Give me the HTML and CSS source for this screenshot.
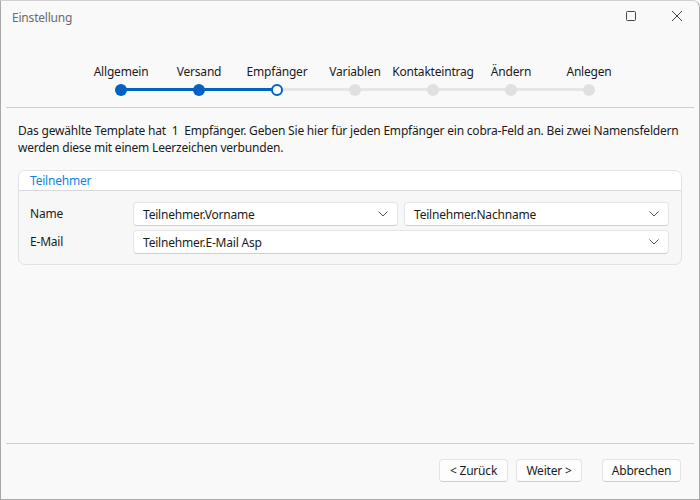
FILE: index.html
```html
<!DOCTYPE html>
<html lang="de">
<head>
  <meta charset="UTF-8" />
  <title>Einstellung</title>
  <link rel="stylesheet" href="styles.css">
</head>
<body>
  <div class="window">
    <div class="titlebar">
      <span class="title">Einstellung</span>
      <div class="controls">
        <svg class="ctl" width="12" height="12" viewBox="0 0 12 12"><rect x="1.5" y="1.5" width="9" height="9" rx="1" fill="none" stroke="#444" stroke-width="1"/></svg>
        <svg class="ctl" width="12" height="12" viewBox="0 0 12 12"><path d="M1 1 L11 11 M11 1 L1 11" stroke="#444" stroke-width="1"/></svg>
      </div>
    </div>

    <div class="stepper">
      <div class="step done first"><span class="label">Allgemein</span><span class="dot"></span></div>
      <div class="step done"><span class="label">Versand</span><span class="dot"></span></div>
      <div class="step current"><span class="label">Empfänger</span><span class="dot"></span></div>
      <div class="step"><span class="label">Variablen</span><span class="dot"></span></div>
      <div class="step"><span class="label">Kontakteintrag</span><span class="dot"></span></div>
      <div class="step"><span class="label">Ändern</span><span class="dot"></span></div>
      <div class="step last"><span class="label">Anlegen</span><span class="dot"></span></div>
    </div>

    <hr class="sep">

    <div class="content">
      <p class="intro">Das gewählte Template hat &nbsp;1&nbsp; Empfänger. Geben Sie hier für jeden Empfänger ein cobra-Feld an. Bei zwei Namensfeldern werden diese mit einem Leerzeichen verbunden.</p>

      <div class="group">
        <div class="group-head">Teilnehmer</div>
        <div class="group-body">
          <span class="field-label">Name</span>
          <div class="combo"><span>Teilnehmer.Vorname</span><svg width="10" height="6" viewBox="0 0 10 6"><path d="M0.5 0.5 L5 5 L9.5 0.5" fill="none" stroke="#555" stroke-width="1"/></svg></div>
          <div class="combo"><span>Teilnehmer.Nachname</span><svg width="10" height="6" viewBox="0 0 10 6"><path d="M0.5 0.5 L5 5 L9.5 0.5" fill="none" stroke="#555" stroke-width="1"/></svg></div>

          <span class="field-label">E-Mail</span>
          <div class="combo wide"><span>Teilnehmer.E-Mail Asp</span><svg width="10" height="6" viewBox="0 0 10 6"><path d="M0.5 0.5 L5 5 L9.5 0.5" fill="none" stroke="#555" stroke-width="1"/></svg></div>
        </div>
      </div>
    </div>

    <div class="footer">
      <hr class="sep">
      <div class="buttons">
        <button class="btn btn-back">&lt; Zurück</button>
        <button class="btn btn-next">Weiter &gt;</button>
        <button class="btn btn-cancel">Abbrechen</button>
      </div>
    </div>
  </div>
</body>
</html>
```

FILE: styles.css
```css
body {
  margin: 0;
  font-family: "Noto Sans", "Open Sans", sans-serif;
  font-size: 12px;
  letter-spacing: -0.2px;
  color: #1b1b1b;
  background: #f9f9f9;
}

.window {
  width: 700px;
  height: 500px;
  box-sizing: border-box;
  border: 1px solid #a9a9a9;
  border-top-color: #d0d0d0;
  border-radius: 0 7px 0 0;
  background: #f9f9f9;
  display: flex;
  flex-direction: column;
}

.titlebar {
  height: 32px;
  display: flex;
  align-items: center;
  justify-content: space-between;
  padding: 0 16px 0 11px;
  flex-shrink: 0;
}

.title {
  color: #6b6b6b;
  font-size: 12px;
}

.controls {
  display: flex;
  gap: 34px;
  margin-top: -2px;
}

.stepper {
  display: flex;
  padding-left: 81px;
  margin-top: 31px;
}

.step {
  width: 78px;
  display: flex;
  flex-direction: column;
  align-items: center;
  position: relative;
}

.step .label {
  line-height: 16px;
  height: 16px;
  white-space: nowrap;
}

.step::before {
  content: "";
  position: absolute;
  left: 0;
  right: 0;
  top: 24px;
  height: 3px;
  background: #e6e6e6;
}

.step.first::before { left: 50%; }
.step.last::before { right: 50%; }
.step.done::before { background: #0063c4; }
.step.current::before { background: linear-gradient(to right, #0063c4 50%, #e6e6e6 50%); }

.dot {
  width: 12px;
  height: 12px;
  border-radius: 50%;
  background: #e0e0e0;
  margin-top: 4px;
  position: relative;
  box-sizing: border-box;
}

.done .dot { background: #0063c4; }
.current .dot { background: #fff; border: 2px solid #0063c4; }

.sep {
  border: none;
  border-top: 1px solid #cdcdcd;
  margin: 11px 5px 0 5px;
}

.content {
  padding: 0 17px;
  flex: 1;
}

.intro {
  margin: 14px 0 14px 0;
  line-height: 17px;
}

.group {
  border: 1px solid #e2e2e2;
  border-radius: 7px;
  background: #f7f7f7;
  overflow: hidden;
}

.group-head {
  background: #fff;
  color: #0a84e0;
  line-height: 19px;
  padding: 0 11px;
  border-bottom: 1px solid #d9d9d9;
}

.group-body {
  display: grid;
  grid-template-columns: 97px 1fr 1fr;
  column-gap: 6px;
  row-gap: 4px;
  padding: 11px 12px 10px 11px;
  align-items: center;
}

.field-label {
  line-height: 24px;
}

.combo {
  height: 24px;
  box-sizing: border-box;
  background: #fff;
  border: 1px solid #e5e5e5;
  border-bottom-color: #cfcfcf;
  border-radius: 4px;
  display: flex;
  align-items: center;
  justify-content: space-between;
  padding: 0 9px 0 9px;
}

.combo.wide {
  grid-column: span 2;
}

.footer {
  flex-shrink: 0;
}

.footer .sep {
  margin-top: 0;
}

.buttons {
  display: flex;
  justify-content: flex-end;
  padding: 15px 18px 17px 0;
}

.btn {
  font-family: inherit;
  font-size: 12px;
  letter-spacing: -0.2px;
  color: #1b1b1b;
  background: #fdfdfd;
  border: 1px solid #e3e3e3;
  border-bottom-color: #cccccc;
  border-radius: 4px;
  height: 23px;
  padding: 0;
}

.btn-back { width: 69px; }
.btn-next { width: 66px; margin-left: 8px; }
.btn-cancel { width: 79px; margin-left: 20px; }
```
